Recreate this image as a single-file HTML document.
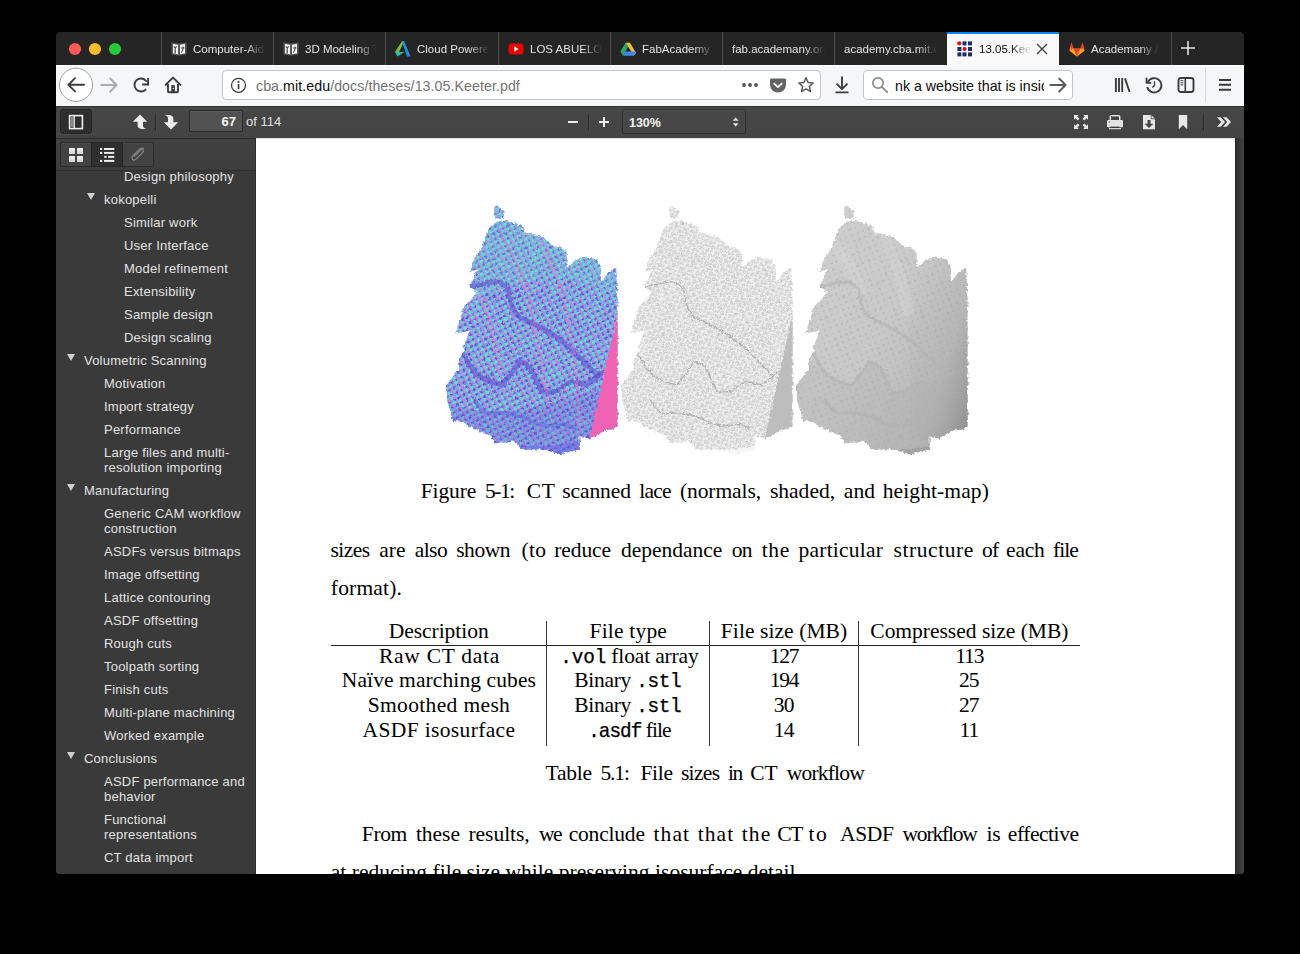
<!DOCTYPE html>
<html><head><meta charset="utf-8">
<style>
*{margin:0;padding:0;box-sizing:border-box}
html,body{width:1300px;height:954px;background:#000;overflow:hidden;font-family:"Liberation Sans",sans-serif}
.a{position:absolute}
#win{position:absolute;left:0;top:0;width:1300px;height:954px;clip-path:inset(32px 56px 80px 56px round 5px 5px 4px 4px);background:#404040}
#tabbar{position:absolute;left:56px;top:32px;width:1188px;height:33px;background:#252525}
.sep{position:absolute;top:32px;width:1px;height:33px;background:#4b4b4b}
.tt{position:absolute;top:42px;height:14px;line-height:14px;color:#e4e4e4;font-size:11.5px;white-space:nowrap;overflow:hidden;-webkit-mask-image:linear-gradient(to right,#000 calc(100% - 20px),transparent 100%)}
#nav{position:absolute;left:56px;top:65px;width:1188px;height:41px;background:#f5f6f7;box-shadow:inset 0 1px 0 #fff}
.field{position:absolute;top:70px;height:30px;background:#fff;border:1px solid #c5c5c7;border-radius:4px}
#pdftb{position:absolute;left:56px;top:106px;width:1188px;height:32px;background:linear-gradient(#474747,#434343);box-shadow:inset 0 1px 0 #323232}
#sidebar{position:absolute;left:56px;top:138px;width:200px;height:736px;background:#3a3a3a;overflow:hidden;box-shadow:inset -1px 0 0 #2e2e2e}
#sbtb{position:absolute;left:56px;top:138px;width:200px;height:33px;background:linear-gradient(#414141,#3d3d3d);box-shadow:inset 0 1px 0 #2c2c2c,inset -1px 0 0 #2e2e2e,inset 0 -1px 0 #2f2f2f}
.ol{position:absolute;color:#e2e2e2;font-size:13px;line-height:15px;white-space:nowrap;letter-spacing:.22px}
.tri{position:absolute;width:0;height:0;border-left:4.8px solid transparent;border-right:4.8px solid transparent;border-top:7.6px solid #d0d0d0;margin-left:-0.3px;margin-top:-0.3px}
#page{position:absolute;left:256px;top:138px;width:979px;height:736px;background:#fff}
#pshadow{position:absolute;left:1235px;top:138px;width:9px;height:736px;background:linear-gradient(to right,#2b2b2b,#3a3a3a 60%,#424242)}
.s{font-family:"Liberation Serif",serif;color:#000;position:absolute;white-space:nowrap;font-size:21.5px;line-height:24px}
.m{font-family:"Liberation Mono",monospace;font-size:0.9em;-webkit-text-stroke:0.25px #000}
.tbf{position:absolute;border-radius:2px;background:rgba(255,255,255,.09);border:1px solid rgba(0,0,0,.38);box-shadow:inset 0 1px 0 rgba(255,255,255,.05)}
.lbl{position:absolute;color:#e0e0e0;font-size:13px;line-height:14px;white-space:nowrap}
</style></head><body>
<div id="win">
  <div id="tabbar"></div>
  <!-- traffic lights -->
  <svg class="a" style="left:68px;top:42px" width="54" height="14">
    <circle cx="7" cy="7" r="6.1" fill="#fc5b57"/>
    <circle cx="27" cy="7" r="6.1" fill="#fbbc2e"/>
    <circle cx="47" cy="7" r="6.1" fill="#28c83f"/>
  </svg>
  <!-- separators -->
  <div class="sep" style="left:161px"></div>
  <div class="sep" style="left:273px"></div>
  <div class="sep" style="left:385px"></div>
  <div class="sep" style="left:498px"></div>
  <div class="sep" style="left:610px"></div>
  <div class="sep" style="left:722px"></div>
  <div class="sep" style="left:834px"></div>
  <div class="sep" style="left:1171px"></div>
  <!-- tab 1 icon book -->
  <svg class="a" style="left:171px;top:41px" width="16" height="16" viewBox="0 0 16 16">
    <path d="M0.5 1.5 L7.5 2.5 L8 3 L8.5 2.5 L15.5 1.5 L15.5 13.5 L8.5 14.5 L8 15 L7.5 14.5 L0.5 13.5Z" fill="#5a5a5a"/>
    <path d="M2 3 L7 3.8 L7 13.2 L2 12.2Z" fill="#f4f4f4"/>
    <path d="M9 3.8 L14 3 L14 12.2 L9 13.2Z" fill="#f4f4f4"/>
    <path d="M4.2 12.5 V6 M3.3 5.2 a1 1 0 1 0 1.8 0" stroke="#555" stroke-width="1.3" fill="none"/>
    <path d="M10 11.5 q2 -1 1.8 -3.5 M11.8 6 a1 1 0 1 0 .1 0" stroke="#555" stroke-width="1.1" fill="none"/>
  </svg>
  <div class="tt" style="left:193px;width:72px">Computer-Aided Design</div>
  <svg class="a" style="left:283px;top:41px" width="16" height="16" viewBox="0 0 16 16">
    <path d="M0.5 1.5 L7.5 2.5 L8 3 L8.5 2.5 L15.5 1.5 L15.5 13.5 L8.5 14.5 L8 15 L7.5 14.5 L0.5 13.5Z" fill="#5a5a5a"/>
    <path d="M2 3 L7 3.8 L7 13.2 L2 12.2Z" fill="#f4f4f4"/>
    <path d="M9 3.8 L14 3 L14 12.2 L9 13.2Z" fill="#f4f4f4"/>
    <path d="M4.2 12.5 V6 M3.3 5.2 a1 1 0 1 0 1.8 0" stroke="#555" stroke-width="1.3" fill="none"/>
    <path d="M10 11.5 q2 -1 1.8 -3.5 M11.8 6 a1 1 0 1 0 .1 0" stroke="#555" stroke-width="1.1" fill="none"/>
  </svg>
  <div class="tt" style="left:305px;width:72px">3D Modeling Tools</div>
  <!-- autodesk -->
  <svg class="a" style="left:395px;top:41px" width="16" height="16" viewBox="0 0 16 16">
    <path d="M7 0.2 L0 11 L4 11 L9.3 0.2Z" fill="#7cbf3a"/>
    <path d="M7 0.2 L9.3 0.2 L15.5 15.5 L12 15.5Z" fill="#1d8fe0"/>
    <path d="M0 11 L9.5 11 L2.5 15.5Z" fill="#2bbfa6"/>
  </svg>
  <div class="tt" style="left:417px;width:72px">Cloud Powered 3D</div>
  <!-- youtube -->
  <svg class="a" style="left:508px;top:41px" width="16" height="16" viewBox="0 0 16 16">
    <rect x="0.5" y="2.5" width="15" height="11" rx="3" fill="#ee0000"/>
    <path d="M6.3 5.3 L10.5 8 L6.3 10.7Z" fill="#fff"/>
  </svg>
  <div class="tt" style="left:530px;width:72px">LOS ABUELOS DE LA</div>
  <!-- drive -->
  <svg class="a" style="left:620px;top:41px" width="16" height="16" viewBox="0 0 16 16">
    <path d="M5.6 1.8 L10 1.8 L16 12 L13.8 14.4Z" fill="#f0bf34"/>
    <path d="M5.6 1.8 L8 6 L3 14.8 L0.4 10.6Z" fill="#2ea66a"/>
    <path d="M3 14.8 L5.4 10.6 L16 10.6 L13.8 14.8Z" fill="#4285f4"/>
  </svg>
  <div class="tt" style="left:642px;width:72px">FabAcademy Drive</div>
  <div class="tt" style="left:732px;width:93px">fab.academany.org</div>
  <div class="tt" style="left:844px;width:93px">academy.cba.mit.edu</div>
  <!-- active tab -->
  <div class="a" style="left:947px;top:32px;width:112px;height:33px;background:#f9f9fa"></div>
  <div class="a" style="left:947px;top:32px;width:112px;height:2px;background:#0a84ff"></div>
  <svg class="a" style="left:957px;top:41px" width="16" height="16" viewBox="0 0 16 16">
    <circle cx="2.3" cy="2.3" r="2.1" fill="#d5121e"/>
    <rect x="5.5" y="0.4" width="4" height="4" fill="#1b2c6b"/><rect x="11" y="0.4" width="4" height="4" fill="#1b2c6b"/>
    <rect x="0.4" y="6" width="4" height="4" fill="#1b2c6b"/><circle cx="7.6" cy="8" r="2.1" fill="#d5121e"/><rect x="11" y="6" width="4" height="4" fill="#1b2c6b"/>
    <rect x="0.4" y="11.4" width="4" height="4" fill="#1b2c6b"/><rect x="5.5" y="11.4" width="4" height="4" fill="#1b2c6b"/><rect x="11" y="11.4" width="4" height="4" fill="#1b2c6b"/>
  </svg>
  <div class="tt" style="left:979px;width:52px;color:#0c0c0d">13.05.Keeter.pdf</div>
  <svg class="a" style="left:1036px;top:43px" width="12" height="12" viewBox="0 0 12 12">
    <path d="M1 1 L11 11 M11 1 L1 11" stroke="#404040" stroke-width="1.4"/>
  </svg>
  <!-- gitlab -->
  <svg class="a" style="left:1069px;top:41px" width="16" height="16" viewBox="0 0 16 16">
    <path d="M8 15.4 L0.4 9.6 L2.4 1.5 L4.5 7.6 L11.5 7.6 L13.6 1.5 L15.6 9.6Z" fill="#fc6d26"/>
    <path d="M8 15.4 L4.5 7.6 L11.5 7.6Z" fill="#e24329"/>
    <path d="M0.4 9.6 L4.5 7.6 L8 15.4Z" fill="#fca326"/>
    <path d="M15.6 9.6 L11.5 7.6 L8 15.4Z" fill="#fca326"/>
    <path d="M2.4 1.5 L4.5 7.6 L1.4 7.6Z" fill="#e24329"/>
    <path d="M13.6 1.5 L11.5 7.6 L14.6 7.6Z" fill="#e24329"/>
  </svg>
  <div class="tt" style="left:1091px;width:68px">Academany / Fab</div>
  <svg class="a" style="left:1181px;top:41px" width="14" height="14" viewBox="0 0 14 14">
    <path d="M7 0 V14 M0 7 H14" stroke="#e8e8e8" stroke-width="1.6"/>
  </svg>

  <!-- NAV TOOLBAR -->
  <div id="nav"></div>
    <!-- back -->
  <svg class="a" style="left:58px;top:67px" width="36" height="36" viewBox="0 0 36 36">
    <circle cx="18" cy="17.8" r="16.6" fill="#fff" stroke="#a4a4a4" stroke-width="1"/>
    <path d="M10.5 17.8 H26 M17 11.2 L10.4 17.8 L17 24.4" stroke="#3b3b3b" stroke-width="1.9" fill="none" stroke-linecap="round" stroke-linejoin="round"/>
  </svg>
  <svg class="a" style="left:100px;top:77px" width="18" height="16" viewBox="0 0 18 16">
    <path d="M1.2 8 H16.5 M10.2 1.5 L16.6 8 L10.2 14.5" stroke="#ababab" stroke-width="1.9" fill="none" stroke-linecap="round" stroke-linejoin="round"/>
  </svg>
  <!-- reload -->
  <svg class="a" style="left:133px;top:77px" width="17" height="16" viewBox="0 0 17 16">
    <path d="M13.1 4.0 A6.5 6.5 0 1 0 12.6 12.6" stroke="#3b3b3b" stroke-width="1.9" fill="none" stroke-linecap="round"/>
    <path d="M15.1 1.1 V7.5 H9.2" stroke="#3b3b3b" stroke-width="1.9" fill="none" stroke-linejoin="miter"/>
  </svg>
  <!-- home -->
  <svg class="a" style="left:164px;top:76px" width="18" height="18" viewBox="0 0 18 18">
    <path d="M1.6 8.9 L9 1.6 L16.4 8.9" stroke="#3b3b3b" stroke-width="1.9" fill="none" stroke-linecap="round" stroke-linejoin="round"/>
    <path d="M4 8 V15.2 Q4 16.2 5 16.2 H13 Q14 16.2 14 15.2 V8" stroke="#3b3b3b" stroke-width="1.9" fill="none" stroke-linejoin="round"/>
    <rect x="7.2" y="9.2" width="3.7" height="7" fill="#3b3b3b"/>
    <circle cx="9.2" cy="12.4" r=".65" fill="#f5f6f7"/>
  </svg>
  <!-- url field -->
  <div class="field" style="left:222px;width:599px"></div>
  <svg class="a" style="left:230px;top:77px" width="17" height="17" viewBox="0 0 17 17">
    <circle cx="8.5" cy="8.3" r="7" stroke="#3b3b3b" stroke-width="1.3" fill="none"/>
    <rect x="7.7" y="7" width="1.7" height="5.2" fill="#3b3b3b"/>
    <circle cx="8.5" cy="4.9" r="1.05" fill="#3b3b3b"/>
  </svg>
  <div class="a" style="left:256px;top:78px;font-size:14.2px;letter-spacing:.07px;line-height:17px;color:#737373;white-space:nowrap">cba.<span style="color:#0c0c0d">mit.edu</span>/docs/theses/13.05.Keeter.pdf</div>
  <svg class="a" style="left:741px;top:82px" width="18" height="6" viewBox="0 0 18 6">
    <circle cx="3" cy="3" r="1.9" fill="#505050"/><circle cx="9" cy="3" r="1.9" fill="#505050"/><circle cx="15" cy="3" r="1.9" fill="#505050"/>
  </svg>
  <svg class="a" style="left:770px;top:77.5px" width="16" height="15" viewBox="0 0 16 15">
    <path d="M0 1.6 Q0 0.4 1.4 0.4 H14.6 Q16 0.4 16 1.6 V6.5 A8 8 0 0 1 0 6.5Z" fill="#636363"/>
    <path d="M4.3 5.6 L8 9.1 L11.7 5.6" stroke="#fff" stroke-width="1.9" fill="none" stroke-linecap="round" stroke-linejoin="round"/>
  </svg>
  <svg class="a" style="left:797px;top:76px" width="18" height="18" viewBox="0 0 18 18">
    <path d="M9 1.8 L11.1 6.5 L16.2 7 L12.4 10.4 L13.5 15.5 L9 12.9 L4.5 15.5 L5.6 10.4 L1.8 7 L6.9 6.5Z" stroke="#5c5c5c" stroke-width="1.5" fill="none" stroke-linejoin="round"/>
  </svg>
  <svg class="a" style="left:835px;top:76px" width="14" height="18" viewBox="0 0 14 18">
    <path d="M7 1.2 V13 M2 8.2 L7 13.2 L12 8.2" stroke="#3b3b3b" stroke-width="1.9" fill="none" stroke-linecap="round" stroke-linejoin="round"/>
    <path d="M1.2 16.3 H12.8" stroke="#3b3b3b" stroke-width="1.8" stroke-linecap="round"/>
  </svg>
  <!-- search -->
  <div class="field" style="left:863px;width:210px"></div>
  <svg class="a" style="left:871px;top:76px" width="18" height="18" viewBox="0 0 18 18">
    <circle cx="7" cy="7" r="5.2" stroke="#8e8e8e" stroke-width="1.7" fill="none"/>
    <path d="M10.8 10.8 L16.2 16.2" stroke="#8e8e8e" stroke-width="1.9" stroke-linecap="round"/>
  </svg>
  <div class="a" style="left:895px;top:78px;width:149px;overflow:hidden;font-size:14.2px;line-height:17px;color:#0c0c0d;white-space:nowrap">nk a website that is inside</div>
  <svg class="a" style="left:1049px;top:77px" width="18" height="16" viewBox="0 0 18 16">
    <path d="M1.2 8 H16.5 M10.2 1.5 L16.6 8 L10.2 14.5" stroke="#5a5a5a" stroke-width="1.8" fill="none" stroke-linecap="round" stroke-linejoin="round"/>
  </svg>
  <!-- library -->
  <svg class="a" style="left:1114px;top:77px" width="17" height="16" viewBox="0 0 17 16">
    <path d="M1.9 1 V15 M5 1 V15 M8.2 1 V15 M11 1.4 L15.6 15" stroke="#3b3b3b" stroke-width="1.9" fill="none"/>
  </svg>
  <!-- history -->
  <svg class="a" style="left:1145px;top:76px" width="18" height="18" viewBox="0 0 18 18">
    <path d="M2.8 6 A7.2 7.2 0 1 1 2.2 11" stroke="#3b3b3b" stroke-width="1.9" fill="none"/>
    <path d="M1.5 1.8 V6.8 H6.3" stroke="#3b3b3b" stroke-width="1.8" fill="none" stroke-linejoin="round"/>
    <path d="M9.5 5.2 V9.6 L7.3 11.6" stroke="#3b3b3b" stroke-width="1.3" fill="none"/>
  </svg>
  <!-- sidebar -->
  <svg class="a" style="left:1177px;top:77px" width="18" height="16" viewBox="0 0 18 16">
    <rect x="1.5" y="1" width="15" height="14" rx="2.5" stroke="#3b3b3b" stroke-width="1.9" fill="none"/>
    <path d="M8.3 1 V15" stroke="#3b3b3b" stroke-width="1.6"/>
    <path d="M3.5 3.7 H6.3 M3.5 5.8 H6.3 M3.5 7.9 H6.3" stroke="#3b3b3b" stroke-width="1"/>
  </svg>
  <div class="a" style="left:1205px;top:68px;width:1px;height:34px;background:#d7d7d9"></div>
  <svg class="a" style="left:1218px;top:78px" width="14" height="14" viewBox="0 0 14 14">
    <path d="M1 2 H13 M1 6.8 H13 M1 11.8 H13" stroke="#3b3b3b" stroke-width="1.9"/>
  </svg>


  <!-- PDF TOOLBAR -->
  <div id="pdftb"></div>
    <div class="a" style="left:60px;top:109px;width:32px;height:25px;border-radius:3px;background:#2e2e2e;border:1px solid #252525;box-shadow:0 1px 0 rgba(255,255,255,.05)"></div>
  <svg class="a" style="left:68px;top:114px" width="16" height="16" viewBox="0 0 16 16">
    <rect x="1.6" y="1.6" width="12.8" height="13" fill="none" stroke="#f0f0f0" stroke-width="1.6"/>
    <rect x="3" y="3" width="2.4" height="10.2" fill="#8a8a8a"/>
    <rect x="5.6" y="2" width="1.3" height="12" fill="#f0f0f0"/>
  </svg>
  <svg class="a" style="left:132px;top:114px" width="16" height="16" viewBox="0 0 16 16">
    <path d="M8 0.6 L15.2 7.8 H11 V11.8 Q11 14 14.5 15 H9.6 Q5.6 14.4 5.6 11 V7.8 H0.8Z" fill="#ececec"/>
  </svg>
  <div class="a" style="left:155px;top:113px;width:1px;height:17px;background:#2a2a2a;box-shadow:1px 0 0 rgba(255,255,255,.05)"></div>
  <svg class="a" style="left:163px;top:114px" width="16" height="16" viewBox="0 0 16 16">
    <path transform="rotate(180 8 8)" d="M8 0.6 L15.2 7.8 H11 V11.8 Q11 14 14.5 15 H9.6 Q5.6 14.4 5.6 11 V7.8 H0.8Z" fill="#ececec"/>
  </svg>
  <div class="tbf" style="left:189px;top:110px;width:54px;height:22px;background:#525252;border-color:#2b2b2b"></div>
  <div class="a" style="left:189px;top:115px;width:47px;text-align:right;color:#f4f4f4;font-size:13px;line-height:14px;font-weight:bold">67</div>
  <div class="lbl" style="left:246px;top:115px">of 114</div>
  <!-- zoom -->
  <div class="a" style="left:568px;top:121px;width:10px;height:2px;background:#eee"></div>
  <div class="a" style="left:588px;top:114px;width:1px;height:16px;background:#2a2a2a;box-shadow:1px 0 0 rgba(255,255,255,.05)"></div>
  <div class="a" style="left:599px;top:121px;width:10px;height:2px;background:#eee"></div>
  <div class="a" style="left:603px;top:117px;width:2px;height:10px;background:#eee"></div>
  <div class="tbf" style="left:622px;top:109px;width:124px;height:25px;background:#474747;border-color:#2e2e2e"></div>
  <div class="a" style="left:629px;top:116px;color:#f4f4f4;font-size:12.4px;line-height:14px;font-weight:bold">130%</div>
  <svg class="a" style="left:732px;top:116px" width="8" height="12" viewBox="0 0 8 12">
    <path d="M0.8 4.8 L3.7 1.6 L6.6 4.8Z M0.8 7.2 L3.7 10.4 L6.6 7.2Z" fill="#e6e6e6"/>
  </svg>
  <!-- right icons -->
  <svg class="a" style="left:1073px;top:114px" width="16" height="16" viewBox="0 0 16 16">
    <path d="M1 1 H5.8 L4.3 2.5 L6.5 4.7 L4.7 6.5 L2.5 4.3 L1 5.8Z" fill="#e8e8e8"/>
    <path d="M15 1 H10.2 L11.7 2.5 L9.5 4.7 L11.3 6.5 L13.5 4.3 L15 5.8Z" fill="#e8e8e8"/>
    <path d="M1 15 H5.8 L4.3 13.5 L6.5 11.3 L4.7 9.5 L2.5 11.7 L1 10.2Z" fill="#e8e8e8"/>
    <path d="M15 15 H10.2 L11.7 13.5 L9.5 11.3 L11.3 9.5 L13.5 11.7 L15 10.2Z" fill="#e8e8e8"/>
  </svg>
  <svg class="a" style="left:1106px;top:114px" width="18" height="16" viewBox="0 0 18 16">
    <path d="M3.6 7 V2.6 Q3.6 1 5.2 1 H12.8 Q14.4 1 14.4 2.6 V7Z" fill="#e8e8e8"/>
    <rect x="5" y="2.4" width="8" height="3.6" fill="#454545"/>
    <path d="M1 7.4 Q1 6 2.4 6 H15.6 Q17 6 17 7.4 V12.6 Q17 13.2 16.4 13.2 H1.6 Q1 13.2 1 12.6Z" fill="#e2e2e2"/>
    <rect x="2.3" y="7.6" width="1.8" height="0.9" fill="#555"/>
    <rect x="4.6" y="12.6" width="8.8" height="1.5" fill="#3a3a3a"/>
    <rect x="3" y="14.1" width="12" height="1.1" fill="#e8e8e8"/>
  </svg>
  <svg class="a" style="left:1142px;top:114px" width="14" height="16" viewBox="0 0 14 16">
    <path d="M1 1 H9.2 L13 4.8 V15.2 H1Z" fill="#e6e6e6"/>
    <path d="M9.2 1 V4.8 H13" fill="none" stroke="#474747" stroke-width=".8"/>
    <path d="M5.5 6 H8.5 V9.8 H11.4 L7 14 L2.6 9.8 H5.5Z" fill="#474747"/>
  </svg>
  <svg class="a" style="left:1178px;top:114px" width="10" height="16" viewBox="0 0 10 16">
    <path d="M0.8 1 H9.2 V15.2 L5 11 L0.8 15.2Z" fill="#e8e8e8"/>
  </svg>
  <div class="a" style="left:1203px;top:113px;width:1px;height:17px;background:#2a2a2a;box-shadow:1px 0 0 rgba(255,255,255,.05)"></div>
  <svg class="a" style="left:1216px;top:116px" width="16" height="12" viewBox="0 0 16 12">
    <path d="M1 1.2 H4.6 L9 6 L4.6 10.8 H1 L5.2 6Z" fill="#e8e8e8"/>
    <path d="M7 1.2 H10.6 L15 6 L10.6 10.8 H7 L11.2 6Z" fill="#e8e8e8"/>
  </svg>


  <!-- SIDEBAR -->
  <div id="sidebar"></div>
    <div class="ol" style="left:124px;top:168.75px">Design philosophy</div>
  <div class="ol" style="left:104px;top:191.75px">kokopelli</div>
  <div class="tri" style="left:87px;top:192.95px"></div>
  <div class="ol" style="left:124px;top:214.75px">Similar work</div>
  <div class="ol" style="left:124px;top:237.75px">User Interface</div>
  <div class="ol" style="left:124px;top:260.75px">Model refinement</div>
  <div class="ol" style="left:124px;top:283.75px">Extensibility</div>
  <div class="ol" style="left:124px;top:306.75px">Sample design</div>
  <div class="ol" style="left:124px;top:329.75px">Design scaling</div>
  <div class="ol" style="left:84px;top:352.75px">Volumetric Scanning</div>
  <div class="tri" style="left:67px;top:353.95px"></div>
  <div class="ol" style="left:104px;top:375.75px">Motivation</div>
  <div class="ol" style="left:104px;top:398.75px">Import strategy</div>
  <div class="ol" style="left:104px;top:421.75px">Performance</div>
  <div class="ol" style="left:104px;top:444.75px">Large files and multi-<br>resolution importing</div>
  <div class="ol" style="left:84px;top:482.75px">Manufacturing</div>
  <div class="tri" style="left:67px;top:483.95px"></div>
  <div class="ol" style="left:104px;top:505.75px">Generic CAM workflow<br>construction</div>
  <div class="ol" style="left:104px;top:543.75px">ASDFs versus bitmaps</div>
  <div class="ol" style="left:104px;top:566.75px">Image offsetting</div>
  <div class="ol" style="left:104px;top:589.75px">Lattice contouring</div>
  <div class="ol" style="left:104px;top:612.75px">ASDF offsetting</div>
  <div class="ol" style="left:104px;top:635.75px">Rough cuts</div>
  <div class="ol" style="left:104px;top:658.75px">Toolpath sorting</div>
  <div class="ol" style="left:104px;top:681.75px">Finish cuts</div>
  <div class="ol" style="left:104px;top:704.75px">Multi-plane machining</div>
  <div class="ol" style="left:104px;top:727.75px">Worked example</div>
  <div class="ol" style="left:84px;top:750.75px">Conclusions</div>
  <div class="tri" style="left:67px;top:751.95px"></div>
  <div class="ol" style="left:104px;top:773.75px">ASDF performance and<br>behavior</div>
  <div class="ol" style="left:104px;top:811.75px">Functional<br>representations</div>
  <div class="ol" style="left:104px;top:849.75px">CT data import</div>

  <div id="sbtb"></div>
  <div class="a" style="left:60px;top:142px;width:94px;height:25px;border-radius:2px;border:1px solid #2a2a2a;background:#434343;box-shadow:inset 0 1px 0 rgba(255,255,255,.05)"></div>
  <div class="a" style="left:91px;top:142px;width:32px;height:25px;background:#2f2f2f;border:1px solid #252525"></div>
  <svg class="a" style="left:68px;top:147px" width="16" height="16" viewBox="0 0 16 16">
    <defs><linearGradient id="sq" x1="0" y1="0" x2="0" y2="1"><stop offset="0" stop-color="#f2f2f2"/><stop offset="1" stop-color="#d2d2d2"/></linearGradient></defs>
    <rect x="1" y="1" width="6" height="6" rx="0.6" fill="url(#sq)"/><rect x="9" y="1" width="6" height="6" rx="0.6" fill="url(#sq)"/>
    <rect x="1" y="9" width="6" height="6" rx="0.6" fill="url(#sq)"/><rect x="9" y="9" width="6" height="6" rx="0.6" fill="url(#sq)"/>
  </svg>
  <svg class="a" style="left:99px;top:147px" width="16" height="16" viewBox="0 0 16 16">
    <rect x="1" y="1" width="2.2" height="2" fill="#eee"/><rect x="5" y="1" width="10.3" height="2" fill="#eee"/>
    <rect x="1" y="4.9" width="2.2" height="2" fill="#eee"/><rect x="5" y="4.9" width="10.3" height="2" fill="#eee"/>
    <rect x="5.3" y="8.9" width="2.2" height="2" fill="#eee"/><rect x="9.1" y="8.9" width="6.2" height="2" fill="#eee"/>
    <rect x="1" y="12.9" width="2.2" height="2" fill="#eee"/><rect x="5" y="12.9" width="10.3" height="2" fill="#eee"/>
  </svg>
  <svg class="a" style="left:130px;top:146px" width="16" height="16" viewBox="0 0 16 16">
    <path d="M4.6 10.2 L10.6 4.2 Q11.8 3 12.9 4.1 Q14 5.2 12.8 6.4 L6 13.2 Q4.2 15 2.6 13.4 Q1 11.8 2.8 10 L9.6 3.2 Q11.6 1.2 13.6 2.6" fill="none" stroke="#8c8c8c" stroke-width="1.1" stroke-linecap="round"/>
  </svg>
  <!-- PAGE -->
  <div id="page"></div>
  <div id="pshadow"></div>
  <div class="a" style="left:256px;top:138px;width:979px;height:2px;background:linear-gradient(rgba(0,0,0,.14),rgba(0,0,0,0))"></div>
  <!-- PAGE_CONTENT -->
  <div class="s" style="left:420.7px;top:478.55px;letter-spacing:-0.088px">Figure</div>
  <div class="s" style="left:484.9px;top:478.55px;letter-spacing:-1.414px">5-1:</div>
  <div class="s" style="left:526.8px;top:478.55px;letter-spacing:0.516px">CT</div>
  <div class="s" style="left:562.3px;top:478.55px;letter-spacing:-0.108px">scanned</div>
  <div class="s" style="left:639.3px;top:478.55px;letter-spacing:-0.803px">lace</div>
  <div class="s" style="left:679.9px;top:478.55px;letter-spacing:-0.064px">(normals,</div>
  <div class="s" style="left:769.9px;top:478.55px;letter-spacing:0.020px">shaded,</div>
  <div class="s" style="left:843.7px;top:478.55px;letter-spacing:0.177px">and</div>
  <div class="s" style="left:882.7px;top:478.55px;letter-spacing:0.112px">height-map)</div>
  <div class="s" style="left:330.5px;top:538.15px;letter-spacing:-0.549px">sizes</div>
  <div class="s" style="left:379.3px;top:538.15px;letter-spacing:-0.025px">are</div>
  <div class="s" style="left:414.7px;top:538.15px;letter-spacing:-0.547px">also</div>
  <div class="s" style="left:456.2px;top:538.15px;letter-spacing:-0.464px">shown</div>
  <div class="s" style="left:521.6px;top:538.15px;letter-spacing:0.205px">(to</div>
  <div class="s" style="left:554.3px;top:538.15px;letter-spacing:-0.099px">reduce</div>
  <div class="s" style="left:620.9px;top:538.15px;letter-spacing:0.003px">dependance</div>
  <div class="s" style="left:731.7px;top:538.15px;letter-spacing:-0.800px">on</div>
  <div class="s" style="left:761.7px;top:538.15px;letter-spacing:0.659px">the</div>
  <div class="s" style="left:798.5px;top:538.15px;letter-spacing:0.225px">particular</div>
  <div class="s" style="left:893.5px;top:538.15px;letter-spacing:0.573px">structure</div>
  <div class="s" style="left:982.0px;top:538.15px;letter-spacing:-0.822px">of</div>
  <div class="s" style="left:1006.1px;top:538.15px;letter-spacing:-0.230px">each</div>
  <div class="s" style="left:1053.0px;top:538.15px;letter-spacing:-0.919px">file</div>
  <div class="s" style="left:330.8px;top:575.95px;letter-spacing:0.179px">format).</div>
  <div class="s" style="left:388.7px;top:618.75px;letter-spacing:-0.031px">Description</div>
  <div class="s" style="left:589.5px;top:618.75px;letter-spacing:0.195px">File type</div>
  <div class="s" style="left:720.8px;top:618.75px;letter-spacing:0.076px">File size (MB)</div>
  <div class="s" style="left:870.3px;top:618.75px;letter-spacing:-0.008px">Compressed size (MB)</div>
  <div class="s" style="left:379.0px;top:643.55px;letter-spacing:0.724px">Raw CT data</div>
  <div class="s" style="left:560.3px;top:643.55px;letter-spacing:-0.157px"><span class=m>.vol</span> float array</div>
  <div class="s" style="left:769.8px;top:643.55px;letter-spacing:-1.275px">127</div>
  <div class="s" style="left:955.2px;top:643.55px;letter-spacing:-1.127px">113</div>
  <div class="s" style="left:341.8px;top:668.35px;letter-spacing:0.098px">Naïve marching cubes</div>
  <div class="s" style="left:574.3px;top:668.35px;letter-spacing:-0.294px">Binary <span class=m>.stl</span></div>
  <div class="s" style="left:769.8px;top:668.35px;letter-spacing:-1.275px">194</div>
  <div class="s" style="left:959.0px;top:668.35px;letter-spacing:-0.900px">25</div>
  <div class="s" style="left:367.7px;top:693.15px;letter-spacing:0.350px">Smoothed mesh</div>
  <div class="s" style="left:574.3px;top:693.15px;letter-spacing:-0.294px">Binary <span class=m>.stl</span></div>
  <div class="s" style="left:773.8px;top:693.15px;letter-spacing:-0.900px">30</div>
  <div class="s" style="left:959.0px;top:693.15px;letter-spacing:-0.900px">27</div>
  <div class="s" style="left:362.6px;top:717.95px;letter-spacing:0.350px">ASDF isosurface</div>
  <div class="s" style="left:588.2px;top:717.95px;letter-spacing:-0.975px"><span class=m>.asdf</span> file</div>
  <div class="s" style="left:773.8px;top:717.95px;letter-spacing:-0.900px">14</div>
  <div class="s" style="left:959.4px;top:717.95px;letter-spacing:-0.900px">11</div>
  <div class="s" style="left:545.5px;top:761.15px;letter-spacing:-0.238px">Table</div>
  <div class="s" style="left:600.4px;top:761.15px;letter-spacing:-1.120px">5.1:</div>
  <div class="s" style="left:640.4px;top:761.15px;letter-spacing:-0.251px">File</div>
  <div class="s" style="left:680.9px;top:761.15px;letter-spacing:-0.649px">sizes</div>
  <div class="s" style="left:728.0px;top:761.15px;letter-spacing:-1.500px">in</div>
  <div class="s" style="left:750.2px;top:761.15px;letter-spacing:0.016px">CT</div>
  <div class="s" style="left:786.8px;top:761.15px;letter-spacing:-0.816px">workflow</div>
  <div class="s" style="left:361.8px;top:821.95px;letter-spacing:-0.365px">From</div>
  <div class="s" style="left:415.9px;top:821.95px;letter-spacing:-0.022px">these</div>
  <div class="s" style="left:468.5px;top:821.95px;letter-spacing:-0.045px">results,</div>
  <div class="s" style="left:539.1px;top:821.95px;letter-spacing:-1.500px">we</div>
  <div class="s" style="left:568.7px;top:821.95px;letter-spacing:-0.187px">conclude</div>
  <div class="s" style="left:653.5px;top:821.95px;letter-spacing:1.117px">that</div>
  <div class="s" style="left:697.7px;top:821.95px;letter-spacing:1.083px">that</div>
  <div class="s" style="left:741.7px;top:821.95px;letter-spacing:1.109px">the</div>
  <div class="s" style="left:777.3px;top:821.95px;letter-spacing:-1.500px">CT</div>
  <div class="s" style="left:808.6px;top:821.95px;letter-spacing:1.500px">to</div>
  <div class="s" style="left:839.9px;top:821.95px;letter-spacing:-0.290px">ASDF</div>
  <div class="s" style="left:902.5px;top:821.95px;letter-spacing:-1.173px">workflow</div>
  <div class="s" style="left:986.5px;top:821.95px;letter-spacing:-0.144px">is</div>
  <div class="s" style="left:1007.8px;top:821.95px;letter-spacing:-0.452px">effective</div>
  <div class="s" style="left:330.8px;top:859.75px;letter-spacing:0.017px">at reducing file size while preserving isosurface detail.</div>
  <div class="a" style="left:331px;top:645px;width:749px;height:1px;background:#222"></div>
  <div class="a" style="left:546px;top:621px;width:1px;height:125px;background:#333"></div>
  <div class="a" style="left:709px;top:621px;width:1px;height:125px;background:#333"></div>
  <div class="a" style="left:858px;top:621px;width:1px;height:125px;background:#333"></div>
  <svg class="a" style="left:440px;top:200px" width="540" height="262" viewBox="0 0 540 262">
    <defs>
      <path id="sil" d="M55.7 22.2 L62 20.5 L69.5 21.5 L76 23.5 L82 26.3 L84.8 33.2 L91 33.5 L98.6 35.3 L107 40.2 L112.5 45.7 L120 47.5 L126.3 51.2 L127.7 66.5 L134.6 61 L145.7 56.8 L156.8 59.5 L160.9 66.5 L160.9 81.7 L169.2 72 L176.2 67.8 L177.5 97 L177.5 225.6 L173 229.3 L161.4 230.8 L148.2 238.8 L139.4 235.9 L140 249 L129 252 L120.3 254.2 L102.7 249.1 L82.2 249.8 L74.8 241.8 L54.3 243.2 L51.3 235.9 L32.3 228.6 L22 221.2 L13.2 221.2 L5.9 196.3 L5.9 186 L19 168.4 L19 158.1 L25 149.3 L22.8 147.7 L29.9 130.4 L15.7 133.6 L23.6 106.9 L37.7 92 L29 87.2 L37.7 69.1 L30.6 71.5 L33 61.3 L42.4 45.6 L47.1 31.4 Z M54.2 8 L58 5.5 L64.4 12 L63 18.9 L55 18Z"/>
      <path id="wedge" d="M177.6 114 L177.6 226 L165 231 L149.5 240Z"/>
      <pattern id="p1" width="5.6" height="5.6" patternUnits="userSpaceOnUse" patternTransform="rotate(-28)">
        <rect width="5.6" height="5.6" fill="#8b9ef0"/>
        <circle cx="1.6" cy="1.5" r="1.6" fill="#62e4c6"/>
        <circle cx="4.5" cy="2.5" r="1.05" fill="#ea6cc6"/>
        <circle cx="2.9" cy="4.3" r="1.25" fill="#5a4ccc"/>
      </pattern>
      <pattern id="p2" width="6.2" height="5.8" patternUnits="userSpaceOnUse" patternTransform="rotate(-24)">
        <rect width="6.2" height="5.8" fill="#efefef"/>
        <ellipse cx="2.2" cy="2.2" rx="1.6" ry="1.25" fill="none" stroke="#a0a0a0" stroke-width=".6"/>
        <ellipse cx="5.2" cy="4.8" rx="1.2" ry="1.0" fill="none" stroke="#b4b4b4" stroke-width=".55"/>
      </pattern>
      <linearGradient id="g3" x1="0" y1="0" x2="1" y2="1">
        <stop offset="0" stop-color="#d0d0d0"/>
        <stop offset="0.5" stop-color="#c8c8c8"/>
        <stop offset="1" stop-color="#acacac"/>
      </linearGradient>
      <linearGradient id="g3r" x1="0" y1="0" x2="1" y2="1">
        <stop offset="0" stop-color="#b0b0b0" stop-opacity="0"/>
        <stop offset="0.6" stop-color="#a8a8a8" stop-opacity=".3"/>
        <stop offset="1" stop-color="#7c7c7c"/>
      </linearGradient>
      <pattern id="p3" width="6" height="6" patternUnits="userSpaceOnUse" patternTransform="rotate(-22)">
        <ellipse cx="2" cy="2" rx="1.1" ry=".8" fill="#a4a4a4" opacity=".7"/>
      </pattern>
      <clipPath id="c1"><use href="#sil"/></clipPath>
      <filter id="rag" x="-5%" y="-5%" width="110%" height="110%"><feTurbulence type="fractalNoise" baseFrequency="0.35" numOctaves="2" seed="3"/><feDisplacementMap in="SourceGraphic" scale="4" xChannelSelector="R" yChannelSelector="G"/></filter>
      <path id="e0" d="M28.3 88 Q38 84 47.1 83.3 Q52 81.5 56.6 81.7 Q64 83 67.6 88 Q70 94 70.7 100.6 Q72 108 75.4 113.1 Q79 117 83.3 119.4 Q95 124 105 130 Q125 142 140 158 Q150 168 158 176"/>
      <path id="e1" d="M21 150 Q28 165 38.1 175.7 Q50 183 61.6 184.6 Q70 176 79.2 161.8 Q86 163 91 168.4 Q97 182 102.7 191.9 Q110 193 117.4 190.4 Q125 184 132 181.6 Q140 184 146.7 184.6 Q155 180 162 172"/>
      <path id="e2" d="M35 200 Q42 212 49.9 213.9 Q60 212 70.4 213.9 Q77 215 82.2 216.8 Q92 222 102.7 225.6 Q114 226 124.7 224.2 Q130 226 135 228.6"/>
    </defs>
    <!-- image 1 normals -->
    <g filter="url(#rag)">
      <use href="#sil" fill="url(#p1)"/>
      <g clip-path="url(#c1)" fill="none" stroke-linecap="round" stroke-linejoin="round">
        <path d="M0 0 H180 V100 Q120 60 60 90 Q30 100 0 90Z" fill="#70e0d0" opacity=".22" stroke="none"/>
        <path d="M0 200 Q60 230 180 180 V262 H0Z" fill="#6a58d8" opacity=".25" stroke="none"/>
        <use href="#e0" stroke="#5c46d0" stroke-width="5" opacity=".55"/>
        <use href="#e1" stroke="#5c46d0" stroke-width="5" opacity=".55"/>
        <use href="#e2" stroke="#5a60e0" stroke-width="4" opacity=".45"/>
        <path d="M5 215 Q30 240 60 248 Q100 256 140 245" stroke="#6a62ea" stroke-width="10" opacity=".5"/>
        <path d="M60 35 Q80 60 92 110 Q100 150 108 200 M100 40 Q122 80 132 140 Q138 190 140 230 M40 95 Q55 130 60 175" stroke="#ea78cc" stroke-width="2.2" opacity=".4"/>
      </g>
      <use href="#wedge" fill="#f064b4"/>
    </g>
    <!-- image 2 shaded -->
    <g transform="translate(175 0)" filter="url(#rag)">
      <use href="#sil" fill="url(#p2)"/>
      <g clip-path="url(#c1)" fill="none" stroke-linecap="round" stroke-linejoin="round">
        <use href="#e0" stroke="#aaaaaa" stroke-width="1.1"/>
        <use href="#e1" stroke="#aaaaaa" stroke-width="1.1"/>
        <use href="#e2" stroke="#b0b0b0" stroke-width="1.1"/>
        <path d="M5 222 Q30 244 60 252 Q100 258 140 250" stroke="#f6f6f6" stroke-width="8"/>
      </g>
      <use href="#wedge" fill="#bdbdbd"/>
    </g>
    <!-- image 3 height map -->
    <g transform="translate(350 0)" filter="url(#rag)">
      <use href="#sil" fill="url(#g3)"/>
      <use href="#sil" fill="url(#p3)"/>
      <g clip-path="url(#c1)" fill="none" stroke-linecap="round" stroke-linejoin="round">
        <path d="M120 60 H178 V240 H120Z" fill="url(#g3r)" stroke="none"/>
        
        <path d="M0 150 Q28 165 38 176 Q50 183 62 185 Q70 176 79 162 Q86 163 91 168 Q97 182 103 192 Q110 193 117 190 Q125 184 132 182 Q140 184 147 185 Q155 180 180 160 L180 262 L0 262Z" fill="#b0b0b0" stroke="none" opacity=".3"/>
        <path d="M40 40 Q60 60 70 90 M95 40 Q110 70 118 110" stroke="#d8d8d8" stroke-width="12" opacity=".35"/>
        <use href="#e0" stroke="#b4b4b4" stroke-width="3" opacity=".7"/>
        <use href="#e1" stroke="#b4b4b4" stroke-width="3" opacity=".7"/>
        <use href="#e2" stroke="#b0b0b0" stroke-width="3" opacity=".7"/>
        <path d="M5 222 Q30 244 60 252 Q100 258 140 250" stroke="#a2a2a2" stroke-width="8"/>
      </g>
    </g>
  </svg>
<!-- /PAGE_CONTENT -->
</div>
</body></html>
